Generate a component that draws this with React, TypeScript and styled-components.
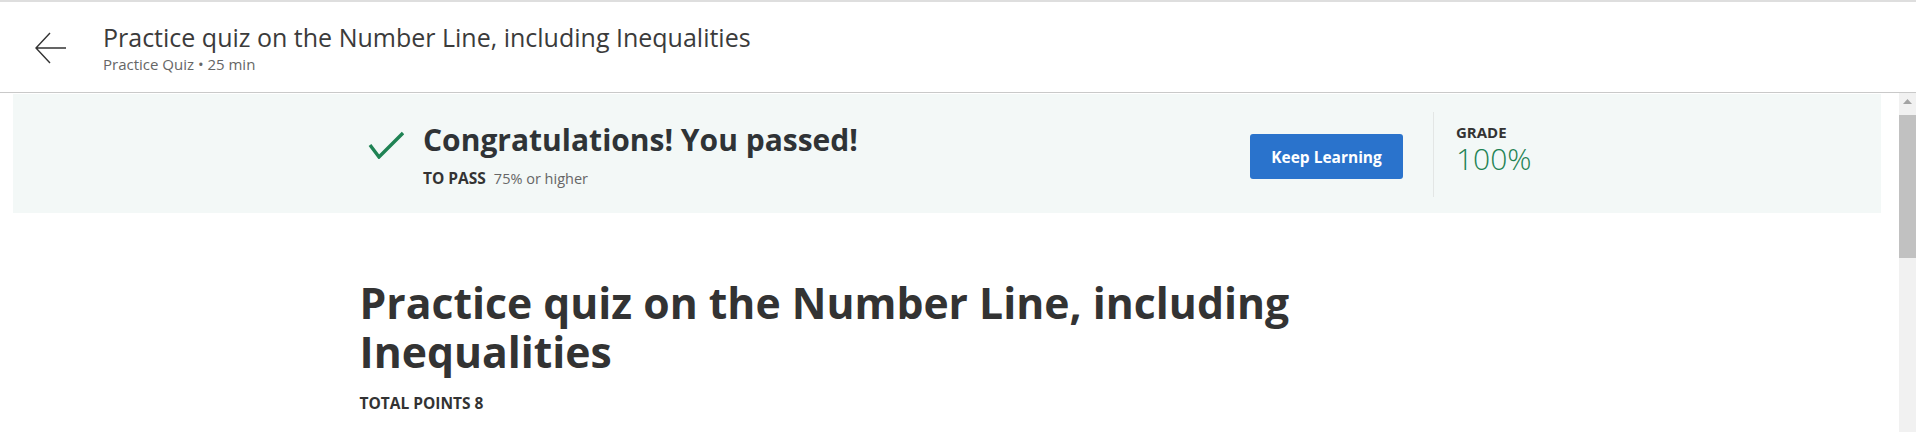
import React from "react";
import styled, { createGlobalStyle } from "styled-components";

const GlobalStyle = createGlobalStyle`
  html, body {
    margin: 0;
    padding: 0;
    height: 100%;
    overflow: hidden;
  }
  body {
    font-family: "Open Sans", "Noto Sans", "Liberation Sans", Arial, sans-serif;
    color: #333;
    background: #fff;
  }
  #root {
    height: 100%;
  }
`;

const Shell = styled.div`
  display: flex;
  flex-direction: column;
  height: 100vh;
`;

const Header = styled.header`
  box-sizing: border-box;
  height: 93px;
  flex: none;
  display: flex;
  align-items: center;
  gap: 36px;
  padding: 2px 0 0 35px;
  border-top: 2px solid #dedede;
  border-bottom: 1px solid #c9c9c9;
  background: #fff;
`;

const BackButton = styled.button`
  width: 32px;
  height: 32px;
  padding: 0;
  border: none;
  background: transparent;
  display: flex;
  cursor: pointer;
`;

const TitleBlock = styled.div`
  display: flex;
  flex-direction: column;
  gap: 2px;
`;

const HeaderTitle = styled.h1`
  margin: 0;
  font-size: 25px;
  line-height: 30px;
  font-weight: 400;
  color: #3b3b3b;
`;

const HeaderSub = styled.div`
  font-size: 15px;
  line-height: 20px;
  color: #666;
`;

const Body = styled.div`
  flex: 1;
  min-height: 0;
  display: flex;
`;

const ScrollArea = styled.main`
  flex: 1;
  min-width: 0;
  overflow: hidden;
`;

const Scrollbar = styled.div`
  flex: none;
  width: 17px;
  display: flex;
  flex-direction: column;
  background: #f1f1f1;
`;

const ScrollArrow = styled.div`
  height: 17px;
  display: flex;
  align-items: center;
  justify-content: center;
`;

const ScrollThumb = styled.div`
  margin-top: 5px;
  height: 143px;
  background: #c1c1c1;
`;

const Banner = styled.section`
  height: 119px;
  margin: 1px 18px 0 13px;
  background: #f3f8f7;
`;

const BannerRow = styled.div`
  box-sizing: border-box;
  width: 1180px;
  margin: 0 auto;
  padding-top: 18px;
  display: flex;
  align-items: flex-start;
`;

const CheckMark = styled.svg`
  flex: none;
  margin: 19px 0 0 11px;
`;

const PassText = styled.div`
  flex: none;
  margin: 8px auto 0 19px;
`;

const PassTitle = styled.h2`
  margin: 0;
  font-size: 30px;
  line-height: 40px;
  font-weight: 700;
  color: #2f3336;
`;

const PassMeta = styled.div`
  margin-top: 8px;
  display: flex;
  align-items: baseline;
  gap: 8px;
  line-height: 20px;
`;

const MetaLabel = styled.span`
  font-size: 15.5px;
  font-weight: 700;
  color: #333;
`;

const MetaValue = styled.span`
  font-size: 14.5px;
  color: #666;
`;

const PrimaryButton = styled.button`
  flex: none;
  margin-top: 22px;
  width: 153px;
  height: 45px;
  border: none;
  border-radius: 3px;
  background: #2a73cc;
  color: #fff;
  font-family: inherit;
  font-size: 15.5px;
  font-weight: 700;
  cursor: pointer;
`;

const Divider = styled.div`
  flex: none;
  width: 1px;
  height: 85px;
  margin-left: 30px;
  background: #e3e6e5;
`;

const GradeBlock = styled.div`
  flex: none;
  width: 81px;
  padding-left: 22px;
  margin-top: 10px;
`;

const GradeLabel = styled.div`
  font-size: 15px;
  line-height: 20px;
  font-weight: 700;
  color: #333;
`;

const GradeValue = styled.div`
  font-size: 30px;
  line-height: 34px;
  font-weight: 300;
  color: #1f8354;
`;

const Content = styled.div`
  width: 1180px;
  margin: 0 auto;
  padding-top: 65px;
`;

const QuizTitle = styled.h1`
  margin: 0;
  max-width: 1000px;
  font-size: 42.7px;
  line-height: 49px;
  font-weight: 700;
  color: #333;
`;

const TotalPoints = styled.div`
  margin-top: 17px;
  font-size: 15.5px;
  line-height: 20px;
  font-weight: 700;
  color: #333;
`;

export default function App() {
  return (
    <>
      <GlobalStyle />
      <Shell>
        <Header>
          <BackButton aria-label="Back">
            <svg width="32" height="32" viewBox="0 0 32 32" fill="none">
              <path d="M15 1 L1 16 L15 31 M1 16 H31" stroke="#333" strokeWidth="1.4" />
            </svg>
          </BackButton>
          <TitleBlock>
            <HeaderTitle>Practice quiz on the Number Line, including Inequalities</HeaderTitle>
            <HeaderSub>Practice Quiz • 25 min</HeaderSub>
          </TitleBlock>
        </Header>
        <Body>
          <ScrollArea>
            <Banner>
              <BannerRow>
                <CheckMark width="36" height="28" viewBox="0 0 36 28" fill="none">
                  <path d="M2 14 L11 26 L35 2" stroke="#1f8354" strokeWidth="3.4" />
                </CheckMark>
                <PassText>
                  <PassTitle>Congratulations! You passed!</PassTitle>
                  <PassMeta>
                    <MetaLabel>TO PASS</MetaLabel>
                    <MetaValue>75% or higher</MetaValue>
                  </PassMeta>
                </PassText>
                <PrimaryButton>Keep Learning</PrimaryButton>
                <Divider />
                <GradeBlock>
                  <GradeLabel>GRADE</GradeLabel>
                  <GradeValue>100%</GradeValue>
                </GradeBlock>
              </BannerRow>
            </Banner>
            <Content>
              <QuizTitle>Practice quiz on the Number Line, including Inequalities</QuizTitle>
              <TotalPoints>TOTAL POINTS 8</TotalPoints>
            </Content>
          </ScrollArea>
          <Scrollbar aria-hidden="true">
            <ScrollArrow>
              <svg width="9" height="5" viewBox="0 0 9 5">
                <path d="M0 5 L4.5 0 L9 5 Z" fill="#a3a3a3" />
              </svg>
            </ScrollArrow>
            <ScrollThumb />
          </Scrollbar>
        </Body>
      </Shell>
    </>
  );
}
